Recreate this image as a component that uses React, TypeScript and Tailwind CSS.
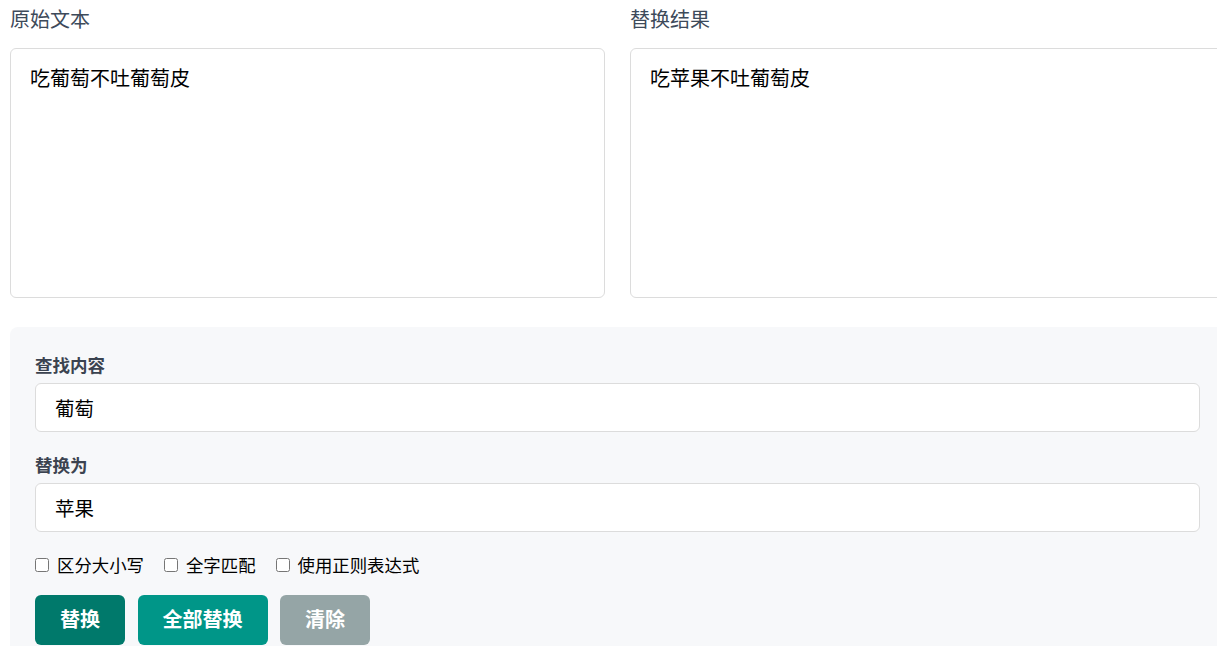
import { useState } from "react";

const FONT = { fontFamily: '"Noto Sans", "Noto Sans CJK SC", sans-serif' };

function TextPane({ label, value }: { label: string; value: string }) {
	return (
		<div className="flex flex-col">
			<h3 className="text-[20px] leading-[30px] font-normal text-[#3d4a5a] mb-[13px]">{label}</h3>
			<textarea
				readOnly
				value={value}
				className="h-[250px] w-full resize-none rounded-md border border-[#dcdcdc] bg-white px-[19px] py-[15px] text-[20px] leading-[30px] text-black outline-none"
			/>
		</div>
	);
}

function Field({ label, value, className }: { label: string; value: string; className?: string }) {
	return (
		<div className={className}>
			<label className="block text-[17.5px] leading-[26px] font-bold text-[#3b4350] mb-[5px]">{label}</label>
			<input
				type="text"
				defaultValue={value}
				className="block h-[49px] w-full rounded-md border border-[#dcdcdc] bg-white px-[19px] text-[19.5px] text-black outline-none"
			/>
		</div>
	);
}

function Option({ label }: { label: string }) {
	return (
		<label className="flex items-center gap-[8px] text-[17.4px] leading-[26px] text-black">
			<input type="checkbox" className="h-[14px] w-[14px] m-0" />
			{label}
		</label>
	);
}

export default function App() {
	const [source] = useState("吃葡萄不吐葡萄皮");
	const [result] = useState("吃苹果不吐葡萄皮");

	return (
		<div className="h-[646px] w-[1217px] overflow-hidden bg-white" style={FONT}>
			<div className="ml-[10px] w-[1215px] pt-[5px]">
				<div className="grid grid-cols-2 gap-[25px]">
					<TextPane label="原始文本" value={source} />
					<TextPane label="替换结果" value={result} />
				</div>

				<div className="mt-[29px] rounded-lg bg-[#f7f8fa] px-[25px] pt-[25px] pb-[25px]">
					<Field label="查找内容" value="葡萄" />
					<Field label="替换为" value="苹果" className="mt-[20px]" />

					<div className="mt-[20px] flex items-center gap-[20px]">
						<Option label="区分大小写" />
						<Option label="全字匹配" />
						<Option label="使用正则表达式" />
					</div>

					<div className="mt-[17px] flex gap-[12.5px]">
						<button className="h-[50px] rounded-md bg-[#00796b] px-[25px] text-[20px] font-bold text-white">
							替换
						</button>
						<button className="h-[50px] rounded-md bg-[#009688] px-[25px] text-[20px] font-bold text-white">
							全部替换
						</button>
						<button className="h-[50px] rounded-md bg-[#95a5a6] px-[25px] text-[20px] font-bold text-white">
							清除
						</button>
					</div>
				</div>
			</div>
		</div>
	);
}
